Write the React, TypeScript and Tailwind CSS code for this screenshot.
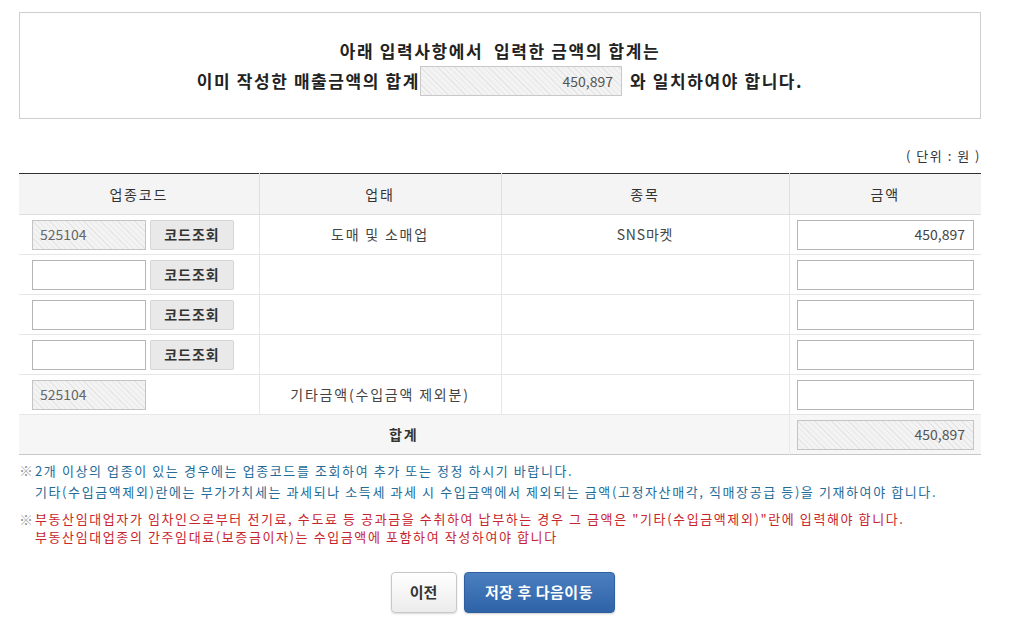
const hatch =
  'bg-[repeating-linear-gradient(45deg,#f3f3f3_0px,#f3f3f3_3px,#e6e6e6_3px,#e6e6e6_4px)]';

type Row = {
  code: string;
  readonly: boolean;
  lookup: boolean;
  type?: string;
  item?: string;
  amount?: string;
};

const rows: Row[] = [
  { code: '525104', readonly: true, lookup: true, type: '도매 및 소매업', item: 'SNS마켓', amount: '450,897' },
  { code: '', readonly: false, lookup: true },
  { code: '', readonly: false, lookup: true },
  { code: '', readonly: false, lookup: true },
  { code: '525104', readonly: true, lookup: false, type: '기타금액(수입금액 제외분)' },
];

function CodeInput({ value, readonly }: { value: string; readonly: boolean }) {
  return (
    <div
      className={`flex h-[30px] w-[114px] items-center border px-[7px] text-[14px] tracking-normal ${
        readonly ? `border-[#c4c4c4] text-[#666] ${hatch}` : 'border-[#b5b5b5] bg-white'
      }`}
    >
      {value}
    </div>
  );
}

function AmountInput({ value, readonly }: { value?: string; readonly?: boolean }) {
  return (
    <div
      className={`ml-auto mr-[7px] flex h-[30px] w-[177px] items-center justify-end border px-[8px] text-[14px] tracking-normal ${
        readonly ? `border-[#c4c4c4] text-[#555] ${hatch}` : 'border-[#b5b5b5] bg-white text-[#444]'
      }`}
    >
      {value}
    </div>
  );
}

export default function App() {
  return (
    <div className="min-h-screen w-full bg-white px-[19px] pb-4 font-['Noto_Sans_CJK_KR','Noto_Sans',sans-serif] text-[#333]">
      <div className="mt-[12px] flex h-[107px] w-[962px] flex-col items-center justify-center border border-[#cfcfcf] text-[17px] font-bold tracking-[1.6px] text-[#222]">
        <p className="mt-[2px] leading-[26px]">아래 입력사항에서&nbsp; 입력한 금액의 합계는</p>
        <p className="mt-[2px] flex items-center leading-[26px]">
          <span>이미 작성한 매출금액의 합계</span>
          <span
            className={`mr-[8px] flex h-[30px] w-[202px] items-center justify-end border border-[#c8c8c8] px-[8px] text-[14px] font-normal tracking-normal text-[#555] ${hatch}`}
          >
            450,897
          </span>
          <span>와 일치하여야 합니다.</span>
        </p>
      </div>

      <div className="mt-[27px] w-[962px] text-right text-[13px] leading-[20px] tracking-[1.5px] text-[#333]">
        ( 단위 : 원 )
      </div>

      <table className="mt-[7px] w-[962px] table-fixed border-collapse text-[14px] tracking-[1.8px]">
        <colgroup>
          <col className="w-[240px]" />
          <col className="w-[242px]" />
          <col className="w-[288px]" />
          <col className="w-[192px]" />
        </colgroup>
        <thead>
          <tr className="h-[41px] border-t border-t-[#333] bg-[#f4f4f4] text-[#333]">
            <th className="border-b border-r border-[#dedede] font-normal">업종코드</th>
            <th className="border-b border-r border-[#dedede] font-normal">업태</th>
            <th className="border-b border-r border-[#dedede] font-normal">종목</th>
            <th className="border-b border-[#dedede] font-normal">금액</th>
          </tr>
        </thead>
        <tbody>
          {rows.map((r, i) => (
            <tr key={i} className="h-[40px] border-b border-[#e6e6e6]">
              <td className="border-r border-[#e6e6e6] pl-[13px]">
                <div className="flex items-center gap-[4px]">
                  <CodeInput value={r.code} readonly={r.readonly} />
                  {r.lookup && (
                    <button className="h-[30px] w-[84px] rounded-[2px] border border-[#d6d6d6] bg-[#e9e9e9] text-[14px] font-semibold tracking-[1px] text-[#333]">
                      코드조회
                    </button>
                  )}
                </div>
              </td>
              <td className="border-r border-[#e6e6e6] text-center text-[#444]">{r.type}</td>
              <td className="border-r border-[#e6e6e6] text-center tracking-[0.8px] text-[#444]">{r.item}</td>
              <td>
                <AmountInput value={r.amount} />
              </td>
            </tr>
          ))}
          <tr className="h-[40px] border-b border-[#c8c8c8] bg-[#f6f6f6]">
            <td colSpan={3} className="border-r border-[#e9e9e9] text-center font-bold text-[#333]">
              합계
            </td>
            <td>
              <AmountInput value="450,897" readonly />
            </td>
          </tr>
        </tbody>
      </table>

      <div className="mt-[5px] text-[13px] leading-[21px] tracking-[1.6px]">
        <div className="flex">
          <span className="w-[16px] shrink-0 text-[14px] tracking-normal text-[#999]">※</span>
          <div className="text-[#246b98]">
            <p>2개 이상의 업종이 있는 경우에는 업종코드를 조회하여 추가 또는 정정 하시기 바랍니다.</p>
            <p>기타(수입금액제외)란에는 부가가치세는 과세되나 소득세 과세 시 수입금액에서 제외되는 금액(고정자산매각, 직매장공급 등)을 기재하여야 합니다.</p>
          </div>
        </div>
        <div className="mt-[8px] flex leading-[18px]">
          <span className="w-[16px] shrink-0 text-[14px] tracking-normal text-[#999]">※</span>
          <div className="text-[#c8242c]">
            <p>부동산임대업자가 임차인으로부터 전기료, 수도료 등 공과금을 수취하여 납부하는 경우 그 금액은 "기타(수입금액제외)"란에 입력해야 합니다.</p>
            <p>부동산임대업종의 간주임대료(보증금이자)는 수입금액에 포함하여 작성하여야 합니다</p>
          </div>
        </div>
      </div>

      <div className="mt-[26px] flex w-[962px] justify-center gap-[7px] pl-[5px]">
        <button className="h-[41px] w-[66px] rounded-[4px] border border-[#c8c8c8] bg-gradient-to-b from-white to-[#ececec] text-[15px] font-bold text-[#333] shadow-[0_1px_2px_rgba(0,0,0,0.15)]">
          이전
        </button>
        <button className="h-[41px] w-[151px] rounded-[4px] border border-[#2f5f9e] bg-gradient-to-b from-[#4a7fc0] to-[#2f63a8] text-[15px] font-bold tracking-[0.5px] text-white shadow-[0_1px_2px_rgba(0,0,0,0.2)]">
          저장 후 다음이동
        </button>
      </div>
    </div>
  );
}
